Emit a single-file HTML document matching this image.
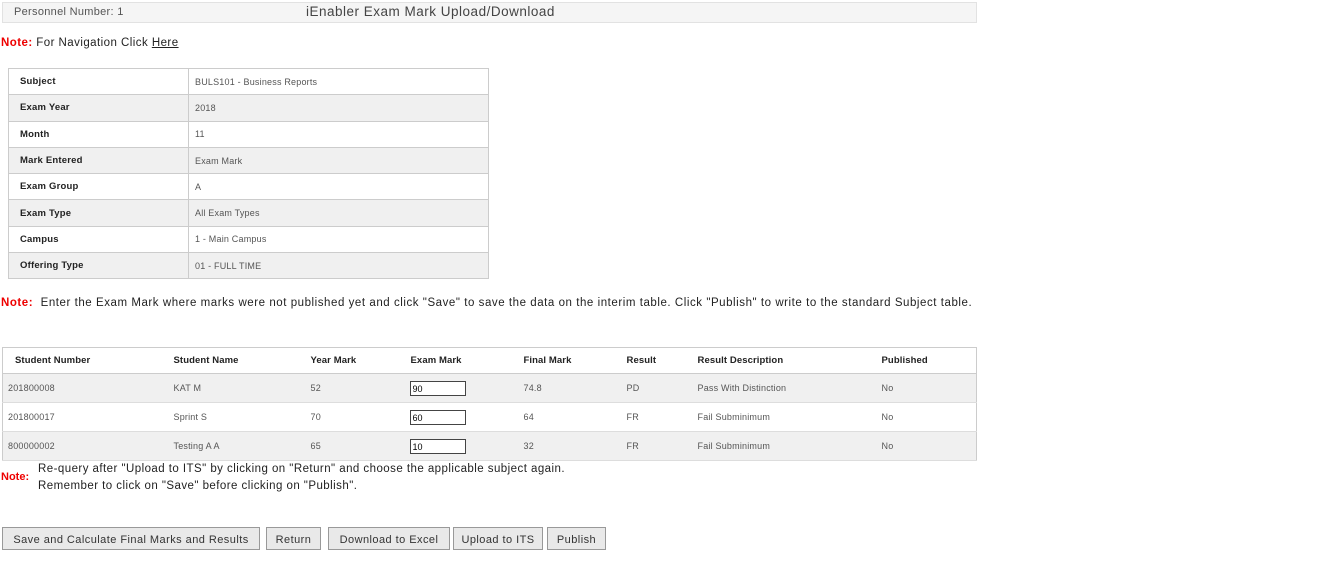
<!DOCTYPE html>
<html><head><style>
body{margin:0;width:1341px;height:572px;background:#fff;font-family:"Liberation Sans",sans-serif;color:#333;position:relative;overflow:hidden}
.a{position:absolute;white-space:nowrap}
.hdr{left:2px;top:2px;width:973px;height:19px;background:#f5f5f5;border:1px solid #e2e2e2}
.red{color:#e00;font-weight:bold}
table{border-collapse:collapse;position:absolute}
.info{left:8px;top:68px;width:481px;border:1px solid #ccc}
.info td{height:25.3px;border:1px solid #ccc;padding:0 0 0 6px;font-size:9px;color:#555;letter-spacing:0.2px}
.info td:first-child{width:168px;font-weight:bold;color:#222;font-size:9.5px;padding-left:11px}
.info tr:nth-child(even) td{background:#f0f0f0}
.st{left:2px;top:347px;width:975px;border:1px solid #ccc}
.st th{height:25px;text-align:left !important;font-size:9.5px;color:#222;padding:0 0 0 5px;border-bottom:1px solid #ccc;background:#fff;letter-spacing:0.1px}
.st th:first-child{padding-left:12px}
.st td{height:28px;font-size:9px;color:#555;padding:0 0 0 5px;border-bottom:1px solid #ddd;letter-spacing:0.2px}
.st tr.g td{background:#f0f0f0}
.st input{width:50px;height:12px;border:1px solid #444;font-size:9px;padding:1px 2px 0;margin:0 0 0 -1px;font-family:inherit;vertical-align:-4px}
.btn{position:absolute;top:527px;height:21px;background:#e9e9e9;border:1px solid #999;font-size:11px;color:#333;text-align:center;line-height:24px;letter-spacing:0.45px;white-space:nowrap}
.t{font-size:11.5px;letter-spacing:0.45px;color:#222}
</style></head><body>
<div class="a hdr"></div>
<div class="a" style="left:14px;top:6px;font-size:11px;color:#555;letter-spacing:0.3px">Personnel Number: 1</div>
<div class="a" style="left:306px;top:4px;font-size:13.5px;color:#444;letter-spacing:0.5px">iEnabler Exam Mark Upload/Download</div>
<div class="a t" style="left:1px;top:37px"><span class="red">Note:</span> For Navigation Click <u>Here</u></div>
<table class="info">
<tr><td>Subject</td><td>BULS101 - Business Reports</td></tr>
<tr><td>Exam Year</td><td>2018</td></tr>
<tr><td>Month</td><td>11</td></tr>
<tr><td>Mark Entered</td><td>Exam Mark</td></tr>
<tr><td>Exam Group</td><td>A</td></tr>
<tr><td>Exam Type</td><td>All Exam Types</td></tr>
<tr><td>Campus</td><td>1 - Main Campus</td></tr>
<tr><td>Offering Type</td><td>01 - FULL TIME</td></tr>
</table>
<div class="a t" style="left:1px;top:297px;letter-spacing:0.55px"><span class="red">Note:</span>&nbsp; Enter the Exam Mark where marks were not published yet and click "Save" to save the data on the interim table. Click "Publish" to write to the standard Subject table.</div>
<table class="st">
<colgroup><col style="width:166px"><col style="width:137px"><col style="width:100px"><col style="width:113px"><col style="width:103px"><col style="width:71px"><col style="width:184px"><col></colgroup>
<tr><th>Student Number</th><th>Student Name</th><th>Year Mark</th><th>Exam Mark</th><th>Final Mark</th><th>Result</th><th>Result Description</th><th>Published</th></tr>
<tr class="g"><td>201800008</td><td>KAT M</td><td>52</td><td><input value="90"></td><td>74.8</td><td>PD</td><td>Pass With Distinction</td><td>No</td></tr>
<tr><td>201800017</td><td>Sprint S</td><td>70</td><td><input value="60"></td><td>64</td><td>FR</td><td>Fail Subminimum</td><td>No</td></tr>
<tr class="g"><td>800000002</td><td>Testing A A</td><td>65</td><td><input value="10"></td><td>32</td><td>FR</td><td>Fail Subminimum</td><td>No</td></tr>
</table>
<div class="a red" style="left:1px;top:471px;font-size:11px">Note:</div>
<div class="a t" style="left:38px;top:461px;line-height:17px">Re-query after "Upload to ITS" by clicking on "Return" and choose the applicable subject again.<br>Remember to click on "Save" before clicking on "Publish".</div>
<div class="btn" style="left:2px;width:256px">Save and Calculate Final Marks and Results</div>
<div class="btn" style="left:266px;width:53px">Return</div>
<div class="btn" style="left:328px;width:120px">Download to Excel</div>
<div class="btn" style="left:453px;width:88px">Upload to ITS</div>
<div class="btn" style="left:547px;width:57px">Publish</div>
</body></html>
